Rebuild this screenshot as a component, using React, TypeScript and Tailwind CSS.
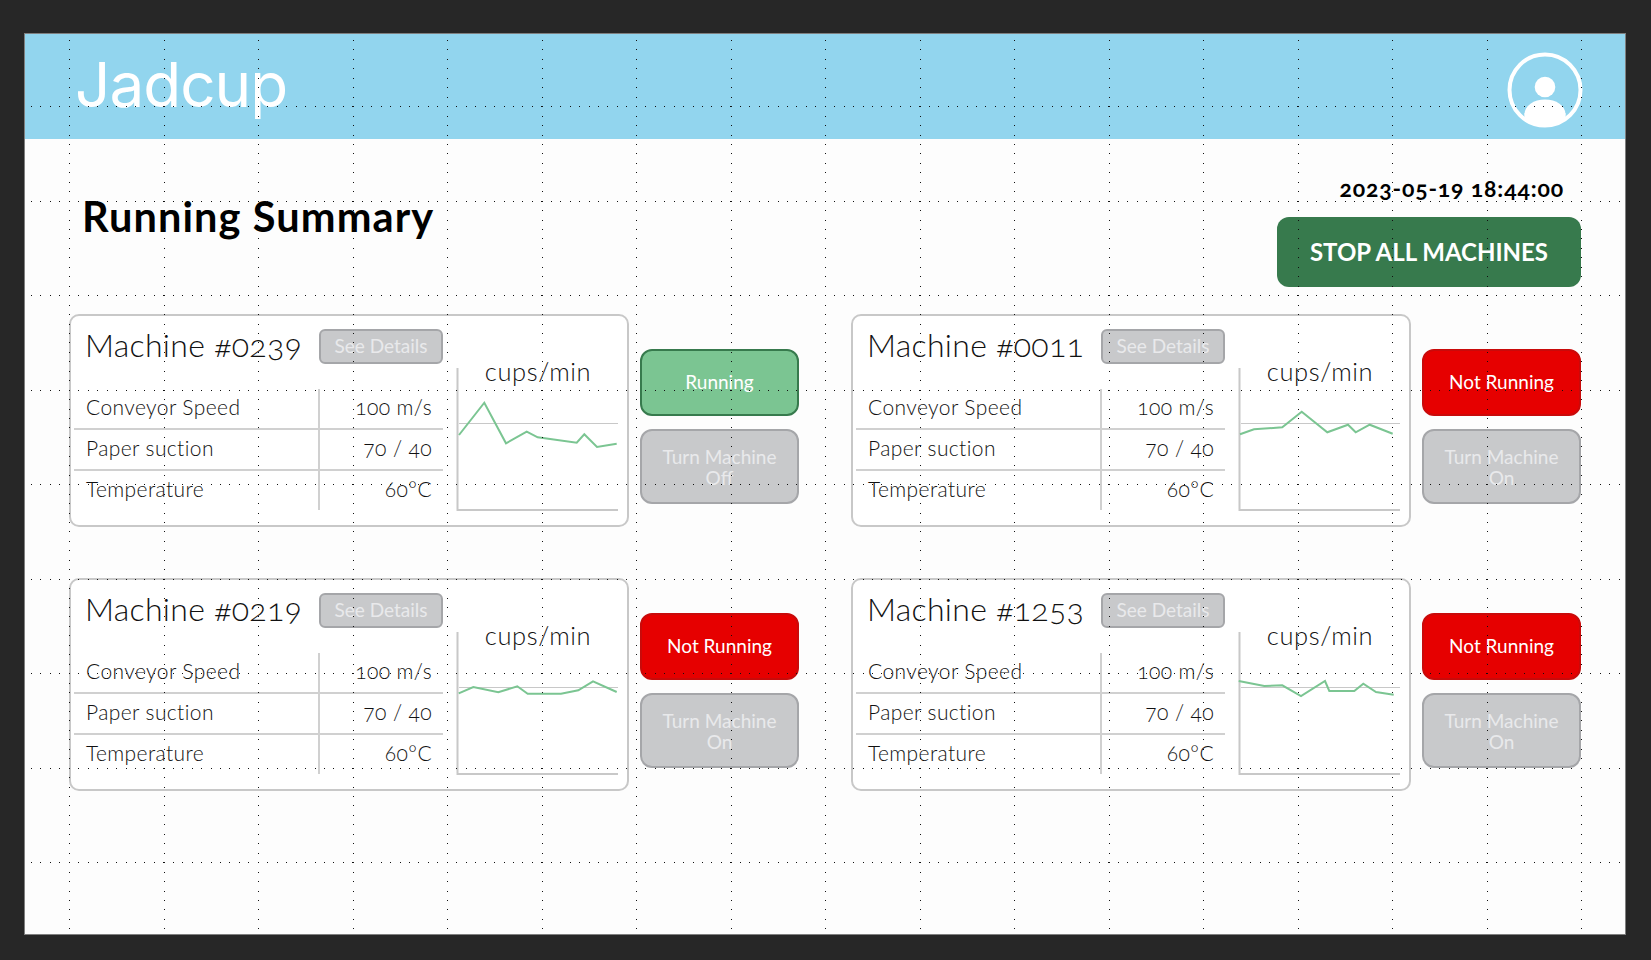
const machines = [
  {
    name: "Machine #0239",
    running: true,
    points: "3,67 28.3,34.7 50,75.3 70.7,63.7 81.7,69.3 120.7,74.7 128.3,66.3 141,79 160.7,75.7",
  },
  {
    name: "Machine #0011",
    running: false,
    points: "2,66.3 16,61.3 44.3,59.3 63.7,43.7 89.3,64.3 110,56.7 117.7,64.3 131.7,56.7 154.7,65.7",
  },
  {
    name: "Machine #0219",
    running: false,
    points: "2.7,61.3 17.3,55 42.3,60.3 61.3,54.3 71.7,61.7 105,61.7 122.3,58.3 137,49.3 160.7,60",
  },
  {
    name: "Machine #1253",
    running: false,
    points: "0.7,49 26.3,54 44.3,53.3 63,64 87,49 91.3,59 116.3,59 125.3,51.7 138,60 155.7,62.7",
  },
]

const stats = [
  ["Conveyor Speed", "100 m/s"],
  ["Paper suction", "70 / 40"],
  ["Temperature", "60°C"],
]

const gridX = Array.from({ length: 17 }, (_, i) => Math.round(69 + i * 94.5))
const gridY = Array.from({ length: 9 }, (_, i) => Math.round(106 + i * 94.5))

// layout guides that sit over the whole artboard
function Guides() {
  return (
    <svg className="absolute inset-0 pointer-events-none" width={1651} height={960}>
      {gridX.map((x) => (
        <line key={x} x1={x + 0.5} x2={x + 0.5} y1={40} y2={930} stroke="#111" strokeDasharray="1 8.45" shapeRendering="crispEdges" />
      ))}
      {gridY.map((y) => (
        <line key={y} x1={31} x2={1620} y1={y + 0.5} y2={y + 0.5} stroke="#111" strokeDasharray="1 8.45" shapeRendering="crispEdges" />
      ))}
    </svg>
  )
}

function Avatar() {
  return (
    <svg width={76} height={76} viewBox="0 0 76 76">
      <defs>
        <clipPath id="avatar-clip">
          <circle cx={38} cy={38} r={36} />
        </clipPath>
      </defs>
      <circle cx={38} cy={35} r={10.3} fill="white" />
      <ellipse cx={38} cy={62} rx={20.5} ry={14.5} fill="white" clipPath="url(#avatar-clip)" />
      <rect x={17.5} y={61} width={41} height={15} fill="white" clipPath="url(#avatar-clip)" />
      <circle cx={38} cy={38} r={35.5} fill="none" stroke="white" strokeWidth={4} />
    </svg>
  )
}

function Chart({ points }: { points: string }) {
  return (
    <div className="relative w-[164px] h-[144px] mt-[52px] ml-[13px]">
      <svg width={164} height={144} className="block">
        <line x1={3} x2={162} y1={55.5} y2={55.5} stroke="#c8c8c8" strokeWidth={1} />
        <polyline points="1.5,0 1.5,142 162,142" fill="none" stroke="#c8c8c8" strokeWidth={2} />
        <polyline points={points} fill="none" stroke="#7bc592" strokeWidth={2} />
      </svg>
      <div className="absolute left-0 right-0 top-[-12px] text-center text-[25.5px] leading-[30px] font-light tracking-[0.6px] text-[#111]">
        cups/min
      </div>
    </div>
  )
}

function MachineCard({ name, points, running }: { name: string; points: string; running: boolean }) {
  return (
    <div className="flex">
      <div className="flex w-[560px] h-[213px] border-2 border-[#c8c8c8] rounded-[10px] bg-white">
        <div className="w-[372px] shrink-0">
          <div className="flex items-center justify-between h-[73px] pl-[14px] pb-[12px]">
            <span className="mb-[4px] text-[32px] leading-none font-light tracking-[0.3px] text-[#111] oldstyle-nums">{name}</span>
            <button className="w-[124px] h-[35px] rounded-[6px] border-2 border-[#a5a6a9] bg-[#c8c9cb] text-[19px] font-normal text-[#e9e9eb]">
              See Details
            </button>
          </div>
          {stats.map(([label, value], i) => (
            <div key={label} className={`flex ml-[3px] ${i < 2 ? "h-[41px] border-b-2 border-[#d0d0d0]" : "h-[39px]"}`}>
              <div className="w-[244px] pl-[12px] pb-[4px] flex items-center text-[21px] font-light tracking-[0.4px] text-[#111]">
                {label}
              </div>
              <div className="w-[125px] border-l-2 border-[#d0d0d0] pr-[11px] pb-[4px] flex items-center justify-end text-[21px] font-light tracking-[0.4px] text-[#111] oldstyle-nums">
                {value}
              </div>
            </div>
          ))}
        </div>
        <Chart points={points} />
      </div>
      <div className="w-[159px] ml-[11px] pt-[35px] flex flex-col gap-[13px]">
        <div
          className={`h-[67px] rounded-[12px] border-2 flex items-center justify-center text-[19px] font-normal text-white ${
            running ? "bg-[#7bc592] border-[#377a4d]" : "bg-[#e60000] border-[#c90a0a]"
          }`}
        >
          {running ? "Running" : "Not Running"}
        </div>
        <button className="h-[75px] px-3 rounded-[12px] border-2 border-[#a5a6a9] bg-[#c8c9cb] text-[19px] leading-[21px] font-normal text-[#e9e9eb]">
          {running ? "Turn Machine Off" : "Turn Machine On"}
        </button>
      </div>
    </div>
  )
}

export default function App() {
  return (
    <div className="relative w-[1651px] h-[960px] overflow-hidden bg-[#272727] pt-[33px] pl-[24px] font-[Lato,sans-serif]">
      <div className="w-[1602px] h-[902px] border border-[#7f7f7f] bg-[#fdfdfd]">
        <header className="flex items-center justify-between h-[105px] bg-[#92d5ee] pl-[50px] pr-[42px]">
          <div className="text-[62px] leading-none font-[Inter,sans-serif] font-normal tracking-[-1px] text-white mt-[-3px]">Jadcup</div>
          <div className="mt-[6px]">
            <Avatar />
          </div>
        </header>

        <div className="flex justify-between h-[175px] pl-[57px] pr-[44px]">
          <h1 className="mt-[51px] text-[41.5px] leading-[52px] font-bold tracking-[1.1px] text-black">Running Summary</h1>
          <div className="flex flex-col items-end">
            <div className="mt-[35px] mr-[17px] mb-[15px] text-[23px] leading-[28px] font-bold tracking-[0.85px] text-black oldstyle-nums">
              2023-05-19 18:44:00
            </div>
            <button className="w-[304px] h-[70px] rounded-[12px] bg-[#377a4d] text-[24px] font-bold text-white">
              STOP ALL MACHINES
            </button>
          </div>
        </div>

        <div className="flex flex-col gap-[51px] pl-[44px]">
          <div className="flex gap-[52px]">
            <MachineCard {...machines[0]} />
            <MachineCard {...machines[1]} />
          </div>
          <div className="flex gap-[52px]">
            <MachineCard {...machines[2]} />
            <MachineCard {...machines[3]} />
          </div>
        </div>
      </div>
      <Guides />
    </div>
  )
}
